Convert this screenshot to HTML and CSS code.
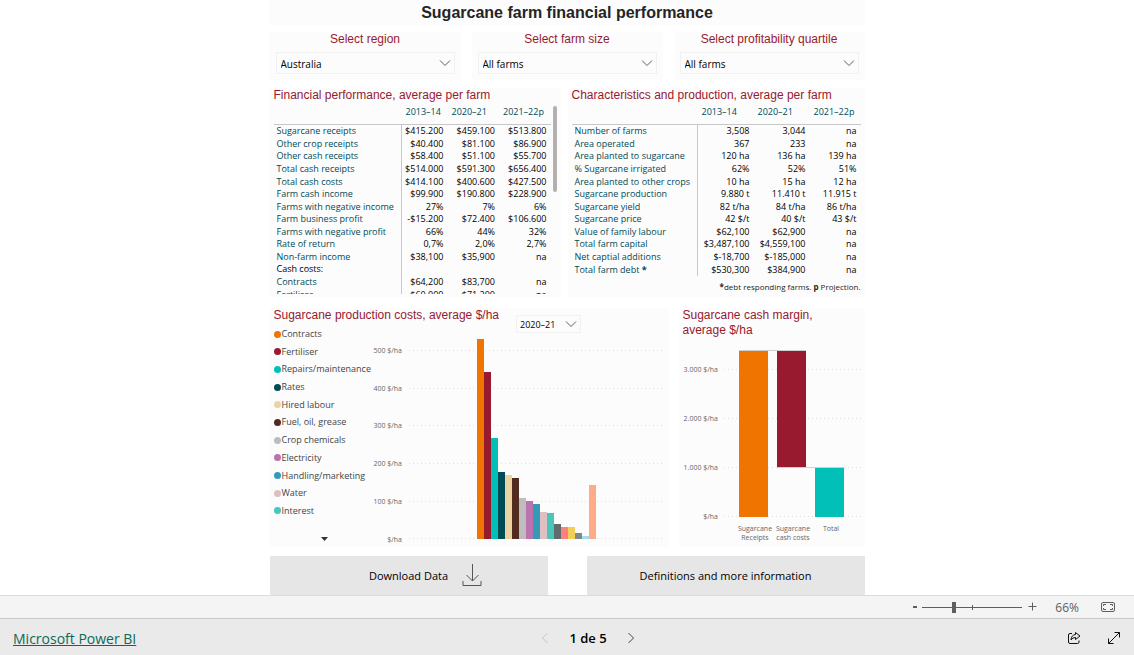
FILE: index.html
```html
<!DOCTYPE html>
<html lang="en">
<head>
<meta charset="utf-8">
<meta name="viewport" content="width=device-width, initial-scale=1">
<title>Sugarcane farm financial performance</title>
<link rel="stylesheet" href="styles.css">
</head>
<body>
<main class="report">
  <h1 class="report-title">Sugarcane farm financial performance</h1>

  <section class="slicers">
    <div class="card slicer">
      <label class="slicer-label" for="region">Select region</label>
      <div class="picker">
        <select id="region"><option>Australia</option></select>
        <svg class="chevron" viewBox="0 0 12 8" aria-hidden="true"><path d="M1 1.5l5 5 5-5"/></svg>
      </div>
    </div>
    <div class="card slicer">
      <label class="slicer-label" for="size">Select farm size</label>
      <div class="picker">
        <select id="size"><option>All farms</option></select>
        <svg class="chevron" viewBox="0 0 12 8" aria-hidden="true"><path d="M1 1.5l5 5 5-5"/></svg>
      </div>
    </div>
    <div class="card slicer">
      <label class="slicer-label" for="quartile">Select profitability quartile</label>
      <div class="picker">
        <select id="quartile"><option>All farms</option></select>
        <svg class="chevron" viewBox="0 0 12 8" aria-hidden="true"><path d="M1 1.5l5 5 5-5"/></svg>
      </div>
    </div>
  </section>

  <section class="tables">
    <div class="card table-card">
      <h2 class="card-title">Financial performance, average per farm</h2>
      <div class="scroller">
        <div class="scroll-view">
          <table class="figures finance">
            <colgroup><col class="c-name"><col class="c-first"><col><col></colgroup>
            <thead><tr><td></td><th scope="col">2013–14</th><th scope="col">2020–21</th><th scope="col">2021–22p</th></tr></thead>
            <tbody>
              <tr><th scope="row">Sugarcane receipts</th><td>$415.200</td><td>$459.100</td><td>$513.800</td></tr>
              <tr><th scope="row">Other crop receipts</th><td>$40.400</td><td>$81.100</td><td>$86.900</td></tr>
              <tr><th scope="row">Other cash receipts</th><td>$58.400</td><td>$51.100</td><td>$55.700</td></tr>
              <tr><th scope="row">Total cash receipts</th><td>$514.000</td><td>$591.300</td><td>$656.400</td></tr>
              <tr><th scope="row">Total cash costs</th><td>$414.100</td><td>$400.600</td><td>$427.500</td></tr>
              <tr><th scope="row">Farm cash income</th><td>$99.900</td><td>$190.800</td><td>$228.900</td></tr>
              <tr><th scope="row">Farms with negative income</th><td>27%</td><td>7%</td><td>6%</td></tr>
              <tr><th scope="row">Farm business profit</th><td>-$15.200</td><td>$72.400</td><td>$106.600</td></tr>
              <tr><th scope="row">Farms with negative profit</th><td>66%</td><td>44%</td><td>32%</td></tr>
              <tr><th scope="row">Rate of return</th><td>0,7%</td><td>2,0%</td><td>2,7%</td></tr>
              <tr><th scope="row">Non-farm income</th><td>$38,100</td><td>$35,900</td><td>na</td></tr>
              <tr><th scope="row" class="group">Cash costs:</th><td></td><td></td><td></td></tr>
              <tr><th scope="row">Contracts</th><td>$64,200</td><td>$83,700</td><td>na</td></tr>
              <tr><th scope="row">Fertiliser</th><td>$60,000</td><td>$71,200</td><td>na</td></tr>
            </tbody>
          </table>
        </div>
        <div class="scroll-track"><div class="scroll-thumb"></div></div>
      </div>
    </div>

    <div class="card table-card">
      <h2 class="card-title">Characteristics and production, average per farm</h2>
      <table class="figures traits">
        <colgroup><col class="c-name"><col><col><col class="c-last"></colgroup>
        <thead><tr><td></td><th scope="col">2013–14</th><th scope="col">2020–21</th><th scope="col">2021–22p</th></tr></thead>
        <tbody>
          <tr><th scope="row">Number of farms</th><td>3,508</td><td>3,044</td><td>na</td></tr>
          <tr><th scope="row">Area operated</th><td>367</td><td>233</td><td>na</td></tr>
          <tr><th scope="row">Area planted to sugarcane</th><td>120 ha</td><td>136 ha</td><td>139 ha</td></tr>
          <tr><th scope="row">% Sugarcane irrigated</th><td>62%</td><td>52%</td><td>51%</td></tr>
          <tr><th scope="row">Area planted to other crops</th><td>10 ha</td><td>15 ha</td><td>12 ha</td></tr>
          <tr><th scope="row">Sugarcane production</th><td>9.880 t</td><td>11.410 t</td><td>11.915 t</td></tr>
          <tr><th scope="row">Sugarcane yield</th><td>82 t/ha</td><td>84 t/ha</td><td>86 t/ha</td></tr>
          <tr><th scope="row">Sugarcane price</th><td>42 $/t</td><td>40 $/t</td><td>43 $/t</td></tr>
          <tr><th scope="row">Value of family labour</th><td>$62,100</td><td>$62,900</td><td>na</td></tr>
          <tr><th scope="row">Total farm capital</th><td>$3,487,100</td><td>$4,559,100</td><td>na</td></tr>
          <tr><th scope="row">Net captial additions</th><td>$-18,700</td><td>$-185,000</td><td>na</td></tr>
          <tr><th scope="row">Total farm debt <b>*</b></th><td>$530,300</td><td>$384,900</td><td>na</td></tr>
        </tbody>
      </table>
      <p class="footnote"><b>*</b>debt responding farms. <b>p</b> Projection.</p>
    </div>
  </section>

  <section class="charts">
    <div class="card chart-card">
      <div class="chart-head">
        <h2 class="card-title">Sugarcane production costs, average $/ha</h2>
        <div class="picker picker-small">
          <select aria-label="Year"><option>2020–21</option></select>
          <svg class="chevron" viewBox="0 0 12 8" aria-hidden="true"><path d="M1 1.5l5 5 5-5"/></svg>
        </div>
      </div>
      <div class="chart-body">
        <div class="legend-column">
          <ul class="legend">
            <li><i class="dot contracts"></i>Contracts</li>
            <li><i class="dot fertiliser"></i>Fertiliser</li>
            <li><i class="dot repairs"></i>Repairs/maintenance</li>
            <li><i class="dot rates"></i>Rates</li>
            <li><i class="dot hired"></i>Hired labour</li>
            <li><i class="dot fuel"></i>Fuel, oil, grease</li>
            <li><i class="dot chemicals"></i>Crop chemicals</li>
            <li><i class="dot electricity"></i>Electricity</li>
            <li><i class="dot handling"></i>Handling/marketing</li>
            <li><i class="dot water"></i>Water</li>
            <li><i class="dot interest"></i>Interest</li>
          </ul>
          <button class="legend-more" type="button" aria-label="More legend items"><svg viewBox="0 0 7 4" aria-hidden="true"><path d="M0 0h7L3.500 4z"/></svg></button>
        </div>
        <svg class="plot" viewBox="0 0 294 213" role="img" aria-label="Production costs by item">
          <g class="grid"><path d="M38 16.500H294M38 54.500H294M38 91.500H294M38 129.500H294M38 167.500H294M38 204.500H294"/></g>
          <g class="axis axis-y">
            <text x="31" y="19">500 $/ha</text><text x="31" y="57">400 $/ha</text><text x="31" y="94">300 $/ha</text>
            <text x="31" y="132">200 $/ha</text><text x="31" y="170">100 $/ha</text><text x="31" y="208">$/ha</text>
          </g>
          <g shape-rendering="crispEdges">
            <rect class="contracts" x="106" y="5" width="7" height="200"/>
            <rect class="fertiliser" x="113" y="38" width="7" height="167"/>
            <rect class="repairs" x="120" y="104" width="7" height="101"/>
            <rect class="rates" x="127" y="138" width="7" height="67"/>
            <rect class="hired" x="134" y="141" width="7" height="64"/>
            <rect class="fuel" x="141" y="144" width="7" height="61"/>
            <rect class="chemicals" x="148" y="164" width="7" height="41"/>
            <rect class="electricity" x="155" y="167" width="7" height="38"/>
            <rect class="handling" x="162" y="170" width="7" height="35"/>
            <rect class="water" x="169" y="178" width="7" height="27"/>
            <rect class="interest" x="176" y="179" width="7" height="26"/>
            <rect fill="#5f6b6d" x="183" y="190" width="7" height="15"/>
            <rect fill="#fd817e" x="190" y="193" width="7" height="12"/>
            <rect fill="#f2cf57" x="197" y="193" width="7" height="12"/>
            <rect fill="#7f898a" x="204" y="199" width="7" height="6"/>
            <rect fill="#a4ddee" x="211" y="202" width="7" height="3"/>
            <rect fill="#fdab89" x="218" y="151" width="7" height="54"/>
          </g>
        </svg>
      </div>
    </div>

    <div class="card chart-card">
      <h2 class="card-title margin-title">Sugarcane cash margin, average $/ha</h2>
      <svg class="plot" viewBox="0 0 178 208" role="img" aria-label="Cash margin waterfall">
        <g class="grid"><path d="M41 30.500H178M41 79.500H178M41 128.500H178M41 177.500H178"/></g>
        <g class="axis axis-y">
          <text x="35" y="33">3.000 $/ha</text><text x="35" y="82">2.000 $/ha</text><text x="35" y="131">1.000 $/ha</text><text x="35" y="180">$/ha</text>
        </g>
        <path class="joint" d="M56 11.500H123M94 128.500H161"/>
        <g shape-rendering="crispEdges">
          <rect class="contracts" x="56" y="12" width="29" height="166"/>
          <rect class="fertiliser" x="94" y="12" width="29" height="116"/>
          <rect class="repairs" x="132" y="129" width="29" height="49"/>
        </g>
        <g class="axis axis-x">
          <text x="72" y="192">Sugarcane</text><text x="72" y="201">Receipts</text>
          <text x="110" y="192">Sugarcane</text><text x="110" y="201">cash costs</text>
          <text x="148" y="192">Total</text>
        </g>
      </svg>
    </div>
  </section>

  <section class="actions">
    <button class="action action-download" type="button">Download Data
      <svg class="download-icon" viewBox="0 0 20 23" aria-hidden="true"><path d="M10.500 0v17M4.500 11l6 6 6-6M1 17v4.500h18V17"/></svg>
    </button>
    <button class="action" type="button">Definitions and more information</button>
  </section>
</main>

<div class="zoom-bar">
  <button class="icon-button" type="button" aria-label="Zoom out"><svg width="6" height="12" viewBox="0 0 6 12"><path d="M1 6h4" stroke-width="2"/></svg></button>
  <input class="zoom-range" type="range" min="0" max="100" value="31" aria-label="Zoom">
  <button class="icon-button" type="button" aria-label="Zoom in"><svg width="9" height="12" viewBox="0 0 9 12"><path d="M.500 5.500h8M4.500 1.500v8"/></svg></button>
  <span class="zoom-value">66%</span>
  <button class="icon-button fit" type="button" aria-label="Fit to page"><svg width="14" height="12" viewBox="0 0 14 12"><rect x=".500" y="1.500" width="13" height="9" rx="1.500"/><path d="M2.500 5V3.500H5M9 3.500h2.500V5M11.500 7v1.500H9M5 8.500H2.500V7"/></svg></button>
</div>

<footer class="footer">
  <a class="brand" href="#">Microsoft Power BI</a>
  <nav class="pager" aria-label="Pages">
    <button class="icon-button" type="button" aria-label="Previous page" disabled><svg width="8" height="12" viewBox="0 0 8 12"><path d="M6.500 1l-5 5 5 5"/></svg></button>
    <span class="page-now">1 de 5</span>
    <button class="icon-button next" type="button" aria-label="Next page"><svg width="8" height="12" viewBox="0 0 8 12"><path d="M1.500 1l5 5-5 5"/></svg></button>
  </nav>
  <div class="footer-tools">
    <button class="icon-button dark" type="button" aria-label="Share"><svg width="14" height="14" viewBox="0 0 14 14"><path d="M5 2.500H3Q1.500 2.500 1.500 4v7q0 1.500 1.500 1.500h7.500q1.500 0 1.500-1.500V9.500M8.500 1.500L13 5 8.500 8.500v-2Q5.500 6.300 4 9q.300-5 4.500-5.500z"/></svg></button>
    <button class="icon-button dark" type="button" aria-label="Full screen"><svg width="14" height="14" viewBox="0 0 14 14"><path d="M1.500 12.500l11-11M7.500 1.500h5v5M1.500 7.500v5h5"/></svg></button>
  </div>
</footer>
</body>
</html>
```

FILE: styles.css
```css
* { box-sizing: border-box; }

body {
  margin: 0;
  min-height: 100vh;
  display: flex;
  flex-direction: column;
  background: #fff;
  color: #000;
  font-family: "Open Sans", "Noto Sans", sans-serif;
  font-size: 9px;
}

h1, h2, p, ul { margin: 0; padding: 0; }
button, select { font: inherit; color: inherit; }

.report {
  width: 100%;
  max-width: 595px;
  margin: 0 auto;
  flex: 1;
  display: flex;
  flex-direction: column;
}

.report-title {
  font: bold 16px/25px "Liberation Sans", sans-serif;
  text-align: center;
  color: #252423;
  background: #fcfcfc;
}

.card { background: #fcfcfc; }

.card-title {
  font: 12px/15px "Liberation Sans", sans-serif;
  color: #971a2f;
}

/* Slicers */
.slicers {
  display: grid;
  grid-template-columns: repeat(3, 1fr);
  gap: 11px;
  margin-top: 7px;
}
.slicer { padding: 0 6px 6px; }
.slicer-label {
  display: block;
  font: 12px/14px "Liberation Sans", sans-serif;
  color: #971a2f;
  text-align: center;
  margin-bottom: 6px;
}
.picker { display: grid; align-items: center; }
.picker > * { grid-area: 1 / 1; }
.picker select {
  appearance: none;
  width: 100%;
  height: 22px;
  padding: 2px 4px 0;
  border: 1px solid #f1f1f1;
  border-radius: 0;
  background: transparent;
  font-size: 10px;
}
.chevron {
  width: 12px;
  height: 8px;
  justify-self: end;
  margin-right: 4px;
  fill: none;
  stroke: #605e5c;
  pointer-events: none;
}

/* Tables */
.tables {
  display: grid;
  grid-template-columns: 291fr 297fr;
  gap: 7px;
  margin-top: 8px;
}
.table-card { padding: 0 4px 3px; }
.scroller { display: flex; }
.scroll-view { flex: 1; height: 191px; overflow: hidden; }
.scroll-track { width: 4px; margin: 0 0 0 2px; padding-top: 3px; }
.scroll-thumb { height: 86px; border-radius: 2px; background: #b3b0ad; }

.figures {
  width: 100%;
  border-collapse: separate;
  border-spacing: 0;
  table-layout: fixed;
  line-height: 12px;
}
.finance { height: 198px; }
.traits { height: 173px; }
.finance .c-name { width: 128px; }
.finance .c-first { width: 46px; }
.traits .c-name { width: 126px; }
.traits .c-last { width: 51px; }
.figures td, .figures th { padding: 0 4px 0 0; white-space: nowrap; }
.figures td { text-align: right; }
.figures th { text-align: left; font-weight: 400; color: #004b56; }
.figures thead td, .figures thead th {
  height: 22px;
  padding: 0 0 4px 4px;
  border-bottom: 1px solid #c8c8c8;
}
.figures tbody th { padding: 0 0 0 3px; border-right: 1px solid #c8c8c8; }
.figures tbody th.group { color: #000; }

.footnote {
  text-align: right;
  font-size: 8px;
  line-height: 12px;
  margin-top: 5px;
  color: #252423;
}

/* Charts */
.charts {
  display: grid;
  grid-template-columns: 399fr 186fr;
  gap: 10px;
  margin-top: 11px;
}
.chart-card { padding: 0 4px; }
.chart-head { display: flex; height: 19px; }
.picker-small { width: 65px; margin: 7px 0 0 17px; align-self: flex-start; }
.picker-small select { height: 18px; font-size: 9px; padding: 0 3px; }
.chart-body { display: flex; padding-top: 7px; }
.legend-column { width: 97px; display: flex; flex-direction: column; }
.legend {
  list-style: none;
  height: 191px;
  margin-top: -7px;
  display: flex;
  flex-direction: column;
  justify-content: space-between;
  line-height: 14px;
  color: #444;
}
.legend li { display: flex; align-items: center; gap: 1px; white-space: nowrap; }
.dot { width: 7px; height: 7px; border-radius: 50%; flex: none; }
.legend-more {
  border: 0;
  padding: 0;
  background: none;
  margin: 19px 0 0 4px;
  height: 5px;
  display: flex;
  justify-content: center;
}
.legend-more svg { width: 7px; height: 4px; fill: #333; }

.plot { display: block; flex: 1; width: 100%; min-width: 0; }
.grid path { stroke: #dedede; stroke-dasharray: 1 3; }
.axis text { font-size: 7px; fill: #666; }
.axis-y text { text-anchor: end; }
.axis-x text { text-anchor: middle; }
.joint { stroke: #cfcfcf; }
.margin-title { max-width: 150px; margin-bottom: 1px; }

.contracts { background: #f07400; fill: #f07400; }
.fertiliser { background: #971a2f; fill: #971a2f; }
.repairs { background: #00c0b8; fill: #00c0b8; }
.rates { background: #004b56; fill: #004b56; }
.hired { background: #ecd3a2; fill: #ecd3a2; }
.fuel { background: #512b1f; fill: #512b1f; }
.chemicals { background: #bdbdbd; fill: #bdbdbd; }
.electricity { background: #bc72ae; fill: #bc72ae; }
.handling { background: #3599b8; fill: #3599b8; }
.water { background: #dfbfbf; fill: #dfbfbf; }
.interest { background: #4ac5bb; fill: #4ac5bb; }

/* Actions */
.actions {
  display: grid;
  grid-template-columns: 1fr 1fr;
  gap: 39px;
  margin-top: 9px;
}
.action {
  display: flex;
  align-items: center;
  justify-content: center;
  gap: 14px;
  height: 39px;
  padding: 0;
  border: 0;
  background: #e6e6e6;
  font-size: 11px;
}
.action-download { padding-left: 34px; }
.download-icon { width: 20px; height: 23px; fill: none; stroke: #555; }

/* Zoom bar */
.zoom-bar {
  display: flex;
  align-items: center;
  justify-content: flex-end;
  height: 24px;
  padding-right: 19px;
  border-top: 1px solid #dcdcdc;
  border-bottom: 1px solid #c8c8c8;
  background: #f4f4f4;
  color: #605e5c;
  font-size: 12px;
}
.icon-button {
  display: flex;
  padding: 0;
  border: 0;
  background: none;
  color: #605e5c;
}
.icon-button svg { fill: none; stroke: currentColor; }
.icon-button:disabled { color: #c8c6c4; }
.icon-button.next { color: #444; }
.icon-button.dark { color: #111; }
.zoom-range {
  appearance: none;
  width: 100px;
  height: 12px;
  margin: 0 6px 0 4px;
  background:
    linear-gradient(#605e5c, #605e5c) 0 6px / 100% 1px no-repeat,
    linear-gradient(#605e5c, #605e5c) 50px 4px / 1px 5px no-repeat;
}
.zoom-range::-webkit-slider-thumb {
  appearance: none;
  width: 4px;
  height: 11px;
  background: #605e5c;
}
.zoom-value { margin: 0 22px 0 18px; }

/* Footer */
.footer {
  display: grid;
  grid-template-columns: 1fr auto 1fr;
  align-items: center;
  height: 36px;
  padding: 2px 13px 0;
  background: #eaeaea;
}
.brand { color: #0b695c; font-size: 14px; justify-self: start; }
.pager { display: flex; align-items: center; gap: 20px; padding-left: 42px; font-size: 13px; font-weight: 600; }
.footer-tools { display: flex; justify-content: flex-end; gap: 26px; }
```
